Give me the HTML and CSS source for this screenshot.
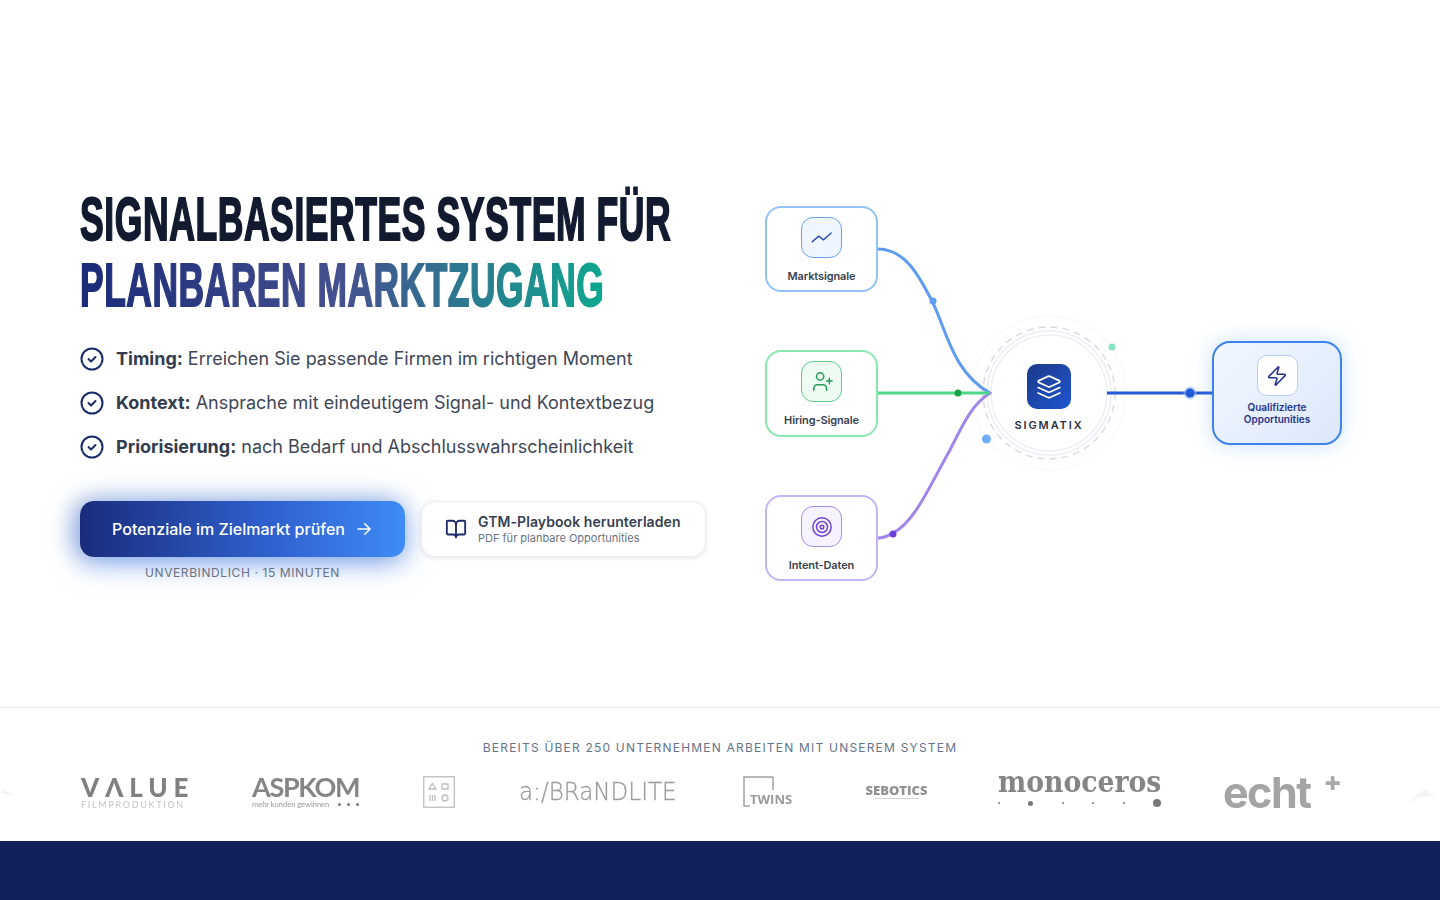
FILE: index.html
```html
<!DOCTYPE html>
<html lang="de">
<head>
<meta charset="utf-8">
<title>Sigmatix</title>
<link rel="stylesheet" href="styles.css">
</head>
<body>
<section class="hero">
  <div class="copy">
    <h1 class="headline">
      <span class="line line-dark">SIGNALBASIERTES SYSTEM FÜR</span>
      <span class="line line-grad">PLANBAREN MARKTZUGANG</span>
    </h1>
    <ul class="points">
      <li class="point">
        <svg class="check" viewBox="0 0 24 24"><circle cx="12" cy="12" r="10.5"/><path d="m8.5 12 2.5 2.5 4.5-4.5"/></svg>
        <span><b>Timing:</b> Erreichen Sie passende Firmen im richtigen Moment</span>
      </li>
      <li class="point">
        <svg class="check" viewBox="0 0 24 24"><circle cx="12" cy="12" r="10.5"/><path d="m8.5 12 2.5 2.5 4.5-4.5"/></svg>
        <span><b>Kontext:</b> Ansprache mit eindeutigem Signal- und Kontextbezug</span>
      </li>
      <li class="point">
        <svg class="check" viewBox="0 0 24 24"><circle cx="12" cy="12" r="10.5"/><path d="m8.5 12 2.5 2.5 4.5-4.5"/></svg>
        <span><b>Priorisierung:</b> nach Bedarf und Abschlusswahrscheinlichkeit</span>
      </li>
    </ul>
    <div class="actions">
      <div class="cta-col">
        <a class="cta">Potenziale im Zielmarkt prüfen
          <svg class="cta-arrow" viewBox="0 0 24 24"><path d="M4 12h16M13 5l7 7-7 7"/></svg>
        </a>
        <p class="cta-note">UNVERBINDLICH · 15 MINUTEN</p>
      </div>
      <a class="playbook">
        <svg class="book" viewBox="0 0 24 24"><path d="M12 7v14"/><path d="M3 18a1 1 0 0 1-1-1V4a1 1 0 0 1 1-1h5a4 4 0 0 1 4 4 4 4 0 0 1 4-4h5a1 1 0 0 1 1 1v13a1 1 0 0 1-1 1h-6a3 3 0 0 0-3 3 3 3 0 0 0-3-3z"/></svg>
        <span class="playbook-text">
          <strong>GTM-Playbook herunterladen</strong>
          <small>PDF für planbare Opportunities</small>
        </span>
      </a>
    </div>
  </div>

  <div class="diagram">
    <svg class="wires" viewBox="0 0 590 400" width="590" height="400">
      <circle class="ring-far" cx="289" cy="193" r="77"/>
      <circle class="ring-mid" cx="289" cy="193" r="62"/>
      <circle class="ring-dash" cx="289" cy="193" r="66"/>
      <circle class="ring-core" cx="289" cy="193" r="58"/>
      <path class="wire wire-blue" d="M118 49C146 49 160 78 172 101C186 128 192 172 230 193"/>
      <path class="wire wire-purple" d="M118 338C124 338 128 336 133 333C155 322 170 285 190 250C202 226 212 204 230 193"/>
      <path class="wire wire-green" d="M118 193H230"/>
      <path class="wire wire-out" d="M347 193H452"/>
      <circle class="dot-blue" cx="173" cy="101" r="3.5"/>
      <circle class="dot-green" cx="198" cy="193" r="3.5"/>
      <circle class="dot-purple" cx="133" cy="334" r="3.5"/>
      <circle class="halo" cx="430" cy="193" r="6.5"/>
      <circle class="dot-out" cx="430" cy="193" r="4.5"/>
      <circle class="spark-blue" cx="226.500" cy="239" r="4.500"/>
      <circle class="spark-green" cx="352" cy="147" r="3.500"/>
    </svg>

    <div class="node node-blue node-a">
      <span class="tile tile-blue"><svg viewBox="0 0 24 24"><path d="M1.500 16 8.500 10l5 4L22 6.500"/></svg></span>
      <span class="node-label">Marktsignale</span>
    </div>
    <div class="node node-green node-b">
      <span class="tile tile-green"><svg viewBox="0 0 24 24"><circle cx="10" cy="6" r="4"/><path d="M3 21v-2a4 4 0 0 1 4-4h6a4 4 0 0 1 4 4v2"/><path d="M20 8v6M17 11h6"/></svg></span>
      <span class="node-label">Hiring-Signale</span>
    </div>
    <div class="node node-purple node-c">
      <span class="tile tile-purple"><svg viewBox="0 0 24 24"><circle cx="12" cy="12" r="10"/><circle cx="12" cy="12" r="6"/><circle cx="12" cy="12" r="2"/></svg></span>
      <span class="node-label">Intent-Daten</span>
    </div>

    <div class="core">
      <span class="core-tile"><svg viewBox="0 0 24 24"><path d="M12.830 2.180a2 2 0 0 0-1.660 0L2.600 6.080a1 1 0 0 0 0 1.830l8.580 3.910a2 2 0 0 0 1.660 0l8.580-3.900a1 1 0 0 0 0-1.830z"/><path d="m2 12.500 9.170 4.170a2 2 0 0 0 1.660 0L22 12.500"/><path d="m2 17.500 9.170 4.170a2 2 0 0 0 1.660 0L22 17.500"/></svg></span>
      <span class="core-label">SIGMATIX</span>
    </div>

    <div class="result">
      <span class="result-tile"><svg viewBox="0 0 24 24"><path d="M4 14a1 1 0 0 1-.78-1.630l9.900-10.200a.5.5 0 0 1 .86.460l-1.920 6.020A1 1 0 0 0 13 10h7a1 1 0 0 1 .78 1.630l-9.900 10.200a.5.5 0 0 1-.86-.460l1.920-6.020A1 1 0 0 0 11 14z"/></svg></span>
      <span class="result-label">Qualifizierte Opportunities</span>
    </div>
  </div>
</section>

<section class="trust">
  <p class="trust-title">BEREITS ÜBER 250 UNTERNEHMEN ARBEITEN MIT UNSEREM SYSTEM</p>
  <span class="edge edge-left"></span>
  <span class="edge edge-right"></span>
  <div class="logos">
    <div class="logo logo-value"><span class="value-main">VΛLUE</span><span class="value-sub">FILMPRODUKTION</span></div>
    <div class="logo logo-aspkom"><span class="asp-main">ASPKOM</span><span class="asp-sub"><span>mehr kunden gewinnen</span><i class="asp-dots"><b></b><b></b><b></b></i></span></div>
    <div class="logo logo-box"><svg viewBox="0 0 32 32" width="32" height="32"><rect x=".75" y=".75" width="30.500" height="30.500"/><path d="m6 13 3.500-5.500L13 13zM19 8h6v5h-6zM7 19v6M9.500 19v6M12 19v6"/><circle cx="22" cy="22" r="3"/></svg></div>
    <div class="logo logo-brand">a:/BRaNDLITE</div>
    <div class="logo logo-twins"><svg viewBox="0 0 50 32" width="50" height="32"><path d="M30 1H1v29h6"/><path d="M30 1v13"/></svg><span class="twins-text">TWINS</span></div>
    <div class="logo logo-sebotics"><span>SEBOTICS</span><i class="seb-sub"></i></div>
    <div class="logo logo-mono"><span class="mono-main">monoceros</span><span class="mono-dots"><i class="md md-s"></i><i class="md md-m"></i><i class="md md-s"></i><i class="md md-s"></i><i class="md md-s"></i><i class="md md-l"></i></span></div>
    <div class="logo logo-echt"><span class="echt-main">echt</span><span class="echt-plus">+</span></div>
  </div>
</section>

<section class="band"></section>
</body>
</html>
```
FILE: styles.css
```css
* { box-sizing: border-box; }
html, body { margin: 0; height: 100%; }
body {
  background: #fff;
  font-family: Inter, "Liberation Sans", sans-serif;
  color: #374151;
  overflow: hidden;
}

/* Hero */
.hero {
  display: flex;
  height: 707px;
  padding: 186px 0 0 80px;
  overflow: hidden;
}
.copy { flex: 0 0 680px; }

.headline { margin: 0; font-weight: 700; height: 132px; width: 640px; }
.line {
  display: block;
  width: max-content;
  height: 66px;
  font-family: "Liberation Sans Narrow", "Liberation Sans", sans-serif;
  font-size: 62px;
  line-height: 66px;
  white-space: nowrap;
  letter-spacing: 1px;
  transform-origin: left center;
  transform: scaleX(0.573);
  -webkit-text-stroke: 2px #111a2e;
}
.line-dark { color: #111a2e; }
.line-grad {
  background: linear-gradient(90deg, #1a2a78 0%, #45508f 50%, #0fa78f 100%);
  -webkit-background-clip: text;
  background-clip: text;
  color: transparent;
  transform: scaleX(0.57);
  -webkit-text-stroke: 2px transparent;
}

.points { list-style: none; margin: 19px 0 0; padding: 0; }
.point {
  display: flex;
  align-items: center;
  gap: 12px;
  height: 44px;
  font-size: 18px;
  color: #3f4757;
}
.point span { position: relative; top: -.5px; }
.point b { font-weight: 700; color: #333c4d; }
.check {
  width: 24px;
  height: 24px;
  flex: none;
  fill: none;
  stroke: #1b2a6b;
  stroke-width: 2;
  stroke-linecap: round;
  stroke-linejoin: round;
}

.actions { display: flex; gap: 16px; margin-top: 32px; align-items: flex-start; }
.cta-col { width: 325px; text-align: center; }
.cta {
  display: flex;
  align-items: center;
  justify-content: center;
  gap: 10px;
  height: 56px;
  border-radius: 14px;
  background: linear-gradient(90deg, #1a2d7c 0%, #2f62d0 60%, #3f8bf5 100%);
  color: #fff;
  font-size: 16px;
  font-weight: 500;
  box-shadow: 0 5px 30px rgba(59, 130, 246, .55), -5px 0 22px rgba(30, 58, 138, .35);
}
.cta-arrow {
  width: 18px;
  height: 18px;
  fill: none;
  stroke: #fff;
  stroke-width: 2;
  stroke-linecap: round;
  stroke-linejoin: round;
}
.cta-note {
  margin: 8px 0 0;
  font-size: 12px;
  line-height: 15px;
  letter-spacing: .6px;
  color: #6b7280;
}
.playbook {
  display: flex;
  align-items: center;
  gap: 11px;
  width: 285px;
  height: 56px;
  padding-left: 23px;
  background: #fff;
  border: 1px solid #eceef2;
  border-radius: 14px;
  box-shadow: 0 1px 4px rgba(15, 23, 42, .12);
}
.book {
  width: 22px;
  height: 22px;
  flex: none;
  fill: none;
  stroke: #1b2a6b;
  stroke-width: 2;
  stroke-linecap: round;
  stroke-linejoin: round;
}
.playbook-text { display: flex; flex-direction: column; gap: 1px; }
.playbook-text strong { font-size: 14px; line-height: 17px; font-weight: 600; letter-spacing: .08px; color: #374151; }
.playbook-text small { font-size: 11px; line-height: 15px; color: #6b7280; }

/* Diagram: free canvas */
.diagram {
  position: relative;
  flex: none;
  width: 590px;
  height: 400px;
  margin-top: 14px;
}
.wires { position: absolute; left: 0; top: 0; overflow: visible; }
.wire { fill: none; stroke-width: 3; stroke-linecap: round; }
.wire-blue { stroke: #5f9bef; }
.wire-purple { stroke: #a086ea; }
.wire-green { stroke: #4fd78a; stroke-linecap: butt; }
.wire-out { stroke: #2358d6; stroke-linecap: butt; }
.dot-blue { fill: #5b9df2; }
.dot-green { fill: #16a34a; }
.dot-purple { fill: #6d3fd9; }
.dot-out { fill: #2358d6; }
.halo { fill: #93c0f5; opacity: .6; }
.spark-blue { fill: #60a5fa; opacity: .9; }
.spark-green { fill: #86e5c0; }
.ring-far { fill: #fff; stroke: #f8f9fb; stroke-width: 1.5; }
.ring-mid { fill: none; stroke: #eef1f7; stroke-width: 2; }
.ring-dash { fill: none; stroke: #d8dce5; stroke-width: 1.5; stroke-dasharray: 7 5; }
.ring-core { fill: #fff; stroke: #eceff5; stroke-width: 1.5; }

.node {
  position: absolute;
  left: 5px;
  width: 113px;
  height: 86px;
  display: flex;
  flex-direction: column;
  align-items: center;
  padding-top: 9px;
  background: #fff;
  border: 2px solid;
  border-radius: 16px;
}
.node-a { top: 6px; }
.node-b { top: 150px; height: 87px; }
.node-c { top: 295px; }
.node-blue { border-color: #93c2f9; }
.node-green { border-color: #88e8b0; }
.node-purple { border-color: #c2b5f7; }
.tile {
  display: flex;
  align-items: center;
  justify-content: center;
  width: 41px;
  height: 41px;
  border: 1.5px solid;
  border-radius: 12px;
}
.tile svg { width: 22px; height: 22px; fill: none; stroke-width: 1.6; stroke-linecap: round; stroke-linejoin: round; }
.tile-blue { background: #eff6ff; border-color: #6ca2ea; }
.tile-blue svg { stroke: #3452b4; }
.tile-green { background: #edfbf2; border-color: #5fcb8c; }
.tile-green svg { stroke: #1f9a58; }
.tile-purple { background: #f6f2ff; border-color: #a68fe8; }
.tile-purple svg { stroke: #6d3fd9; }
.node-label { margin-top: 11px; font-size: 11px; line-height: 14px; font-weight: 600; letter-spacing: -.12px; color: #374151; white-space: nowrap; }

.core {
  position: absolute;
  left: 231px;
  top: 164px;
  width: 116px;
  display: flex;
  flex-direction: column;
  align-items: center;
}
.core-tile {
  display: flex;
  align-items: center;
  justify-content: center;
  width: 44px;
  height: 45px;
  border-radius: 10px;
  background: linear-gradient(135deg, #1e3a8a, #1d55cf);
}
.core-tile svg { width: 26px; height: 26px; fill: none; stroke: #fff; stroke-width: 1.6; stroke-linejoin: round; stroke-linecap: round; }
.core-label { margin-top: 9px; font-size: 11px; line-height: 14px; font-weight: 600; letter-spacing: 1.9px; color: #2b3040; }

.result {
  position: absolute;
  left: 452px;
  top: 141px;
  width: 130px;
  height: 104px;
  display: flex;
  flex-direction: column;
  align-items: center;
  padding-top: 12px;
  border: 2px solid #3f83ea;
  border-radius: 18px;
  background: linear-gradient(135deg, #f2f7ff, #dbe8fb);
  box-shadow: 0 0 20px rgba(96, 165, 250, .35);
}
.result-tile {
  display: flex;
  align-items: center;
  justify-content: center;
  width: 41px;
  height: 41px;
  background: #fff;
  border: 1px solid #b9cff2;
  border-radius: 10px;
}
.result-tile svg { width: 22px; height: 22px; fill: none; stroke: #27348b; stroke-width: 1.7; stroke-linejoin: round; }
.result-label {
  margin-top: 5px;
  width: 90px;
  text-align: center;
  font-size: 10px;
  line-height: 12px;
  font-weight: 600;
  color: #27348b;
}

/* Logos */
.trust {
  position: relative;
  height: 134px;
  border-top: 1px solid #e8eaee;
  padding-top: 32px;
}
.trust-title {
  margin: 0;
  text-align: center;
  font-size: 12px;
  line-height: 15px;
  letter-spacing: 1.2px;
  color: #64748b;
}
.logos {
  display: flex;
  align-items: center;
  height: 40px;
  margin-top: 17px;
  padding-left: 81px;
  color: #8b8b8b;
}
.logo { flex: none; filter: blur(.35px); }
.logo-value { width: 107px; display: flex; flex-direction: column; margin-right: 64px; }
.value-main { font: 900 26px/24px Lato, sans-serif; letter-spacing: 5.9px; color: #808080; white-space: nowrap; }
.value-sub { font: 400 9px/11px Lato, sans-serif; letter-spacing: 1.7px; color: #c4c4c4; white-space: nowrap; }
.logo-aspkom { width: 107px; display: flex; flex-direction: column; margin-right: 64px; }
.asp-main { font: 700 27px/25px Lato, sans-serif; letter-spacing: -1.3px; color: #858585; white-space: nowrap; }
.asp-sub { display: flex; justify-content: space-between; align-items: center; font: 400 7.5px/11px Lato, sans-serif; color: #999; white-space: nowrap; }
.asp-dots { display: flex; gap: 6px; }
.asp-dots b { display: block; width: 3px; height: 3px; border-radius: 50%; background: #777; }
.logo-box { width: 32px; height: 32px; margin-right: 64px; }
.logo-box svg { display: block; fill: none; stroke: #bdbdbd; stroke-width: 1.3; }
.logo-brand { width: 157px; margin-right: 67px; font: 300 24px/28px "DejaVu Sans", sans-serif; color: #9c9c9c; -webkit-text-stroke: .3px #9c9c9c; white-space: nowrap; transform-origin: left center; transform: scaleX(.96); }
.logo-twins { position: relative; width: 50px; height: 32px; margin-right: 72px; }
.logo-twins svg { display: block; fill: none; stroke: #a0a0a0; stroke-width: 1.5; }
.twins-text { position: absolute; left: 7px; top: 16px; font: 700 13px/15px "Open Sans", sans-serif; color: #9a9a9a; }
.logo-sebotics { width: 63px; margin-right: 70px; display: flex; flex-direction: column; align-items: center; margin-top: -2px; font: 800 13px/14px "Open Sans", sans-serif; color: #929292; white-space: nowrap; }
.seb-sub { width: 44px; height: 1px; margin-top: 1px; background: #d4d4d4; }
.logo-mono { width: 163px; margin-right: 62px; display: flex; flex-direction: column; margin-top: -8px; }
.mono-main { font: 700 29px/26px "DejaVu Serif", serif; color: #858585; white-space: nowrap; transform-origin: left center; transform: scaleX(.92); }
.mono-dots { display: flex; justify-content: space-between; align-items: center; margin-top: 4px; }
.md { display: block; border-radius: 50%; background: #777; }
.md-s { width: 2px; height: 2px; }
.md-m { width: 5px; height: 5px; }
.md-l { width: 8px; height: 8px; }
.logo-echt { position: relative; width: 118px; }
.echt-main { font: 700 43px/40px Inter, sans-serif; color: #a4a4a4; letter-spacing: -1.5px; }
.echt-plus { position: absolute; right: 0; top: -5px; font: 800 28px/30px "Open Sans", sans-serif; color: #a8a8a8; }
.edge { position: absolute; top: 82px; background: #f3f3f3; }
.edge-left { left: 0; width: 14px; height: 6px; clip-path: polygon(0 50%, 100% 100%, 30% 0); }
.edge-right { left: 1406px; width: 30px; height: 14px; clip-path: polygon(0 100%, 60% 0, 100% 40%, 40% 50%); }

.band { height: 59px; background: #10215c; }
```
